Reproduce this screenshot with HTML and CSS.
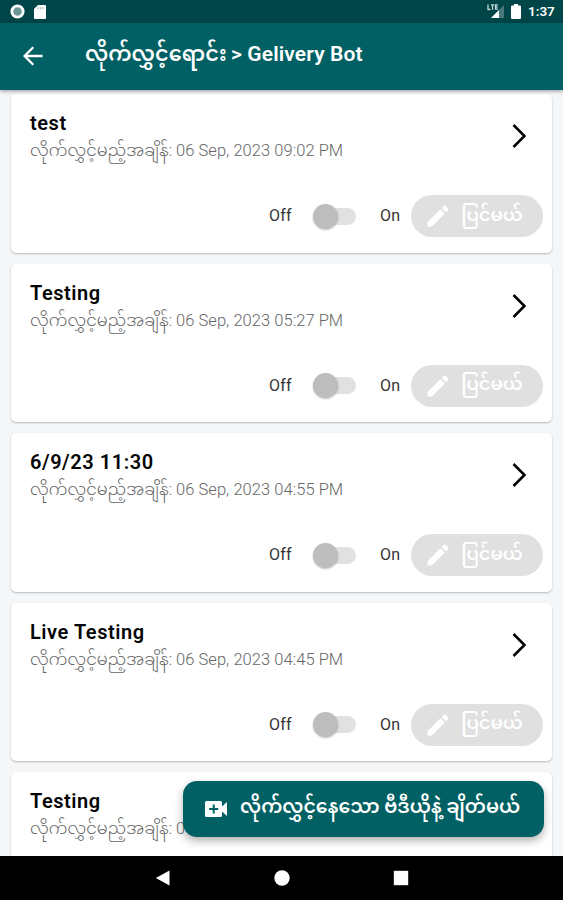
FILE: index.html
```
<!DOCTYPE html>
<html lang="my">
<head>
<meta charset="utf-8">
<title>Gelivery Bot</title>
<link rel="stylesheet" href="styles.css">
</head>
<body>
<svg class="defs" width="0" height="0" aria-hidden="true">
  <symbol id="pencil" viewBox="0 0 24 24"><path d="M3 17.25V21h3.75L17.81 9.94l-3.75-3.75L3 17.25zM20.71 7.04a1 1 0 0 0 0-1.41l-2.34-2.34a1 1 0 0 0-1.41 0l-1.83 1.83 3.75 3.75 1.83-1.83z"/></symbol>
  <symbol id="chevron" viewBox="0 0 14 24"><path d="M1.5 1 12.5 12 1.5 23" fill="none" stroke="#000" stroke-width="2.6"/></symbol>
</svg>
<div class="screen">
  <div class="status">
    <svg class="ring" viewBox="0 0 14 14"><circle cx="7" cy="7" r="5.3" fill="#6d9696" stroke="#fff" stroke-width="2.6"/></svg>
    <svg class="sd" viewBox="0 0 12 14"><path d="M4 0h7q1 0 1 1v12q0 1-1 1H1q-1 0-1-1V4z" fill="#fff"/><path d="M4 2.2v2M6.5 2.2v2M9 2.2v2" stroke="#9db9b9" stroke-width="1.2"/></svg>
    <span class="spacer"></span>
    <svg class="signal" viewBox="0 0 18 15"><path d="M17 1v13H4z" fill="#48797a"/><path d="M12 6v8H4z" fill="#fff"/><path d="M1 .5v5h2.400M4 .8h3.200M5.500.8v5M11 .8H8.500v4.400H11M8.500 3h2" fill="none" stroke="#c5d5d5" stroke-width="1.300"/></svg>
    <svg class="battery" viewBox="0 0 10 15"><path d="M3 0h4v1.600h2q1 0 1 1V14q0 1-1 1H1q-1 0-1-1V2.600q0-1 1-1h2z" fill="#fff"/></svg>
    <span class="time">1:37</span>
  </div>
  <header class="bar">
    <svg class="back" viewBox="0 0 20 20"><path d="M19.500 10H2M10.300 1.300 1.600 10l8.700 8.700" fill="none" stroke="#fff" stroke-width="2.300"/></svg>
    <h1><span class="title-my">လိုက်လွှင့်ရောင်း</span><span class="title-en">&gt; Gelivery Bot</span></h1>
  </header>
  <main class="list">
    <article class="card">
      <div class="head"><div><h2>test</h2><p><span class="label">လိုက်လွှင့်မည့်အချိန်:</span><span>06 Sep, 2023 09:02 PM</span></p></div><svg class="chev"><use href="#chevron"/></svg></div>
      <div class="actions"><span class="off">Off</span><span class="switch"></span><span class="on">On</span><button class="edit"><svg><use href="#pencil"/></svg><span>ပြင်မယ်</span></button></div>
    </article>
    <article class="card">
      <div class="head"><div><h2>Testing</h2><p><span class="label">လိုက်လွှင့်မည့်အချိန်:</span><span>06 Sep, 2023 05:27 PM</span></p></div><svg class="chev"><use href="#chevron"/></svg></div>
      <div class="actions"><span class="off">Off</span><span class="switch"></span><span class="on">On</span><button class="edit"><svg><use href="#pencil"/></svg><span>ပြင်မယ်</span></button></div>
    </article>
    <article class="card">
      <div class="head"><div><h2>6/9/23 11:30</h2><p><span class="label">လိုက်လွှင့်မည့်အချိန်:</span><span>06 Sep, 2023 04:55 PM</span></p></div><svg class="chev"><use href="#chevron"/></svg></div>
      <div class="actions"><span class="off">Off</span><span class="switch"></span><span class="on">On</span><button class="edit"><svg><use href="#pencil"/></svg><span>ပြင်မယ်</span></button></div>
    </article>
    <article class="card">
      <div class="head"><div><h2>Live Testing</h2><p><span class="label">လိုက်လွှင့်မည့်အချိန်:</span><span>06 Sep, 2023 04:45 PM</span></p></div><svg class="chev"><use href="#chevron"/></svg></div>
      <div class="actions"><span class="off">Off</span><span class="switch"></span><span class="on">On</span><button class="edit"><svg><use href="#pencil"/></svg><span>ပြင်မယ်</span></button></div>
    </article>
    <article class="card">
      <div class="head"><div><h2>Testing</h2><p><span class="label">လိုက်လွှင့်မည့်အချိန်:</span><span>0</span></p></div></div>
    </article>
    <button class="fab">
      <svg viewBox="0 0 23 16"><path d="M1.500 0h14q1.500 0 1.500 1.500v4L22 1v14l-5-4.500v4q0 1.500-1.500 1.500h-14Q0 16 0 14.500v-13Q0 0 1.500 0z" fill="#fff"/><path d="M8.700 3.500v9M4.200 8h9" stroke="#006064" stroke-width="2"/></svg>
      <span>လိုက်လွှင့်နေသော ဗီဒီယိုနဲ့ ချိတ်မယ်</span>
    </button>
  </main>
  <nav class="nav">
    <svg viewBox="0 0 16 16"><path d="M14.500.5v15L.8 8z" fill="#fff"/></svg>
    <svg viewBox="0 0 16 16"><circle cx="8" cy="8" r="7.700" fill="#fff"/></svg>
    <svg viewBox="0 0 16 16"><path d="M.8.800h14.400v14.400H.8z" fill="#fff"/></svg>
  </nav>
</div>
</body>
</html>
```
FILE: styles.css
```
* { box-sizing: border-box; }
body { margin: 0; font-family: Roboto, "Noto Sans Myanmar", "Noto Sans", sans-serif; overflow: hidden; }
h1, h2, p { margin: 0; white-space: nowrap; }
button { border: 0; font-family: inherit; }
.defs { position: absolute; }
.screen { width: 563px; height: 900px; display: flex; flex-direction: column; background: #f4f6f8; overflow: hidden; }
.status { flex: 0 0 23px; background: #004649; display: flex; align-items: center; padding: 0 8px 0 10px; color: #fff; }
.ring { width: 15px; height: 15px; }
.sd { width: 12px; height: 14px; margin-left: 9px; }
.spacer { flex: 1; }
.signal { width: 18px; height: 15px; }
.battery { width: 10px; height: 15px; margin-left: 6px; }
.time { width: 27px; margin-left: 7px; font-size: 13.5px; font-weight: 600; line-height: 23px; white-space: nowrap; }
.bar { flex: 0 0 67px; background: #006064; display: flex; align-items: center; padding: 0 0 1px 23px; color: #fff; box-shadow: 0 1px 4px rgba(0,0,0,.4); z-index: 1; }
.back { width: 20px; height: 20px; }
.bar h1 { display: flex; align-items: baseline; margin-left: 42px; font-size: 21px; line-height: 28px; font-weight: 600; letter-spacing: .12px; padding-bottom: 4px; }
.title-my { width: 146px; font-size: 20.9px; letter-spacing: 0; }
.list { flex: 0 0 766px; position: relative; overflow: hidden; padding: 4.300px 11px 0; display: flex; flex-direction: column; gap: 11px; }
.card { flex: 0 0 158.500px; background: #fff; border-radius: 5px; box-shadow: 0 1px 2px rgba(0,0,0,.25); padding: 17.200px 9px 0 19px; }
.head { height: 84px; display: flex; justify-content: space-between; }
.card h2 { font-size: 20px; line-height: 24px; font-weight: 600; color: #050505; letter-spacing: .55px; }
.card p { display: flex; align-items: baseline; font-size: 16.500px; line-height: 24px; font-weight: 300; color: #666; padding-top: 4px; letter-spacing: .05px; }
.label { width: 146px; font-size: 16.600px; letter-spacing: 0; }
.chev { width: 14px; height: 24px; margin: 13px 17px 0 0; }
.actions { display: flex; align-items: center; height: 42px; font-size: 16px; color: #333; justify-content: flex-end; }
.off, .on { font-weight: 400; letter-spacing: .2px; padding-bottom: 1px; }
.off { width: 24px; }
.switch { width: 43px; height: 17px; margin: 0 24px 0 20px; border-radius: 9px; background: linear-gradient(90deg, transparent 9px, #e1e1e1 9px); display: flex; align-items: center; }
.switch::before { content: ""; width: 25px; height: 25px; border-radius: 50%; background: #bdbdbd; box-shadow: 0 1px 2px rgba(0,0,0,.25); }
.on { width: 31px; }
.edit { width: 132px; height: 42px; border-radius: 21px; background: #e0e0e0; color: #fff; display: flex; align-items: center; padding: 0 0 0 13px; font-size: 17.900px; font-weight: 600; }
.edit svg { width: 28px; height: 28px; fill: #fff; }
.edit span { margin-left: 9px; width: 62px; white-space: nowrap; }
.fab { position: absolute; left: 183px; top: 691px; width: 361px; height: 56px; border-radius: 14px; background: #006064; color: #fff; box-shadow: 0 4px 8px rgba(0,0,0,.3); display: flex; align-items: center; padding: 0 0 1px 22px; font-size: 18.950px; font-weight: 600; white-space: nowrap; }
.fab svg { width: 23px; height: 16px; }
.fab span { margin-left: 12px; padding-bottom: 1px; }
.nav { flex: 1; background: #000; display: flex; align-items: center; padding: 0 0 1px 155px; gap: 103px; z-index: 1; }
.nav svg { width: 16px; height: 16px; }
```
